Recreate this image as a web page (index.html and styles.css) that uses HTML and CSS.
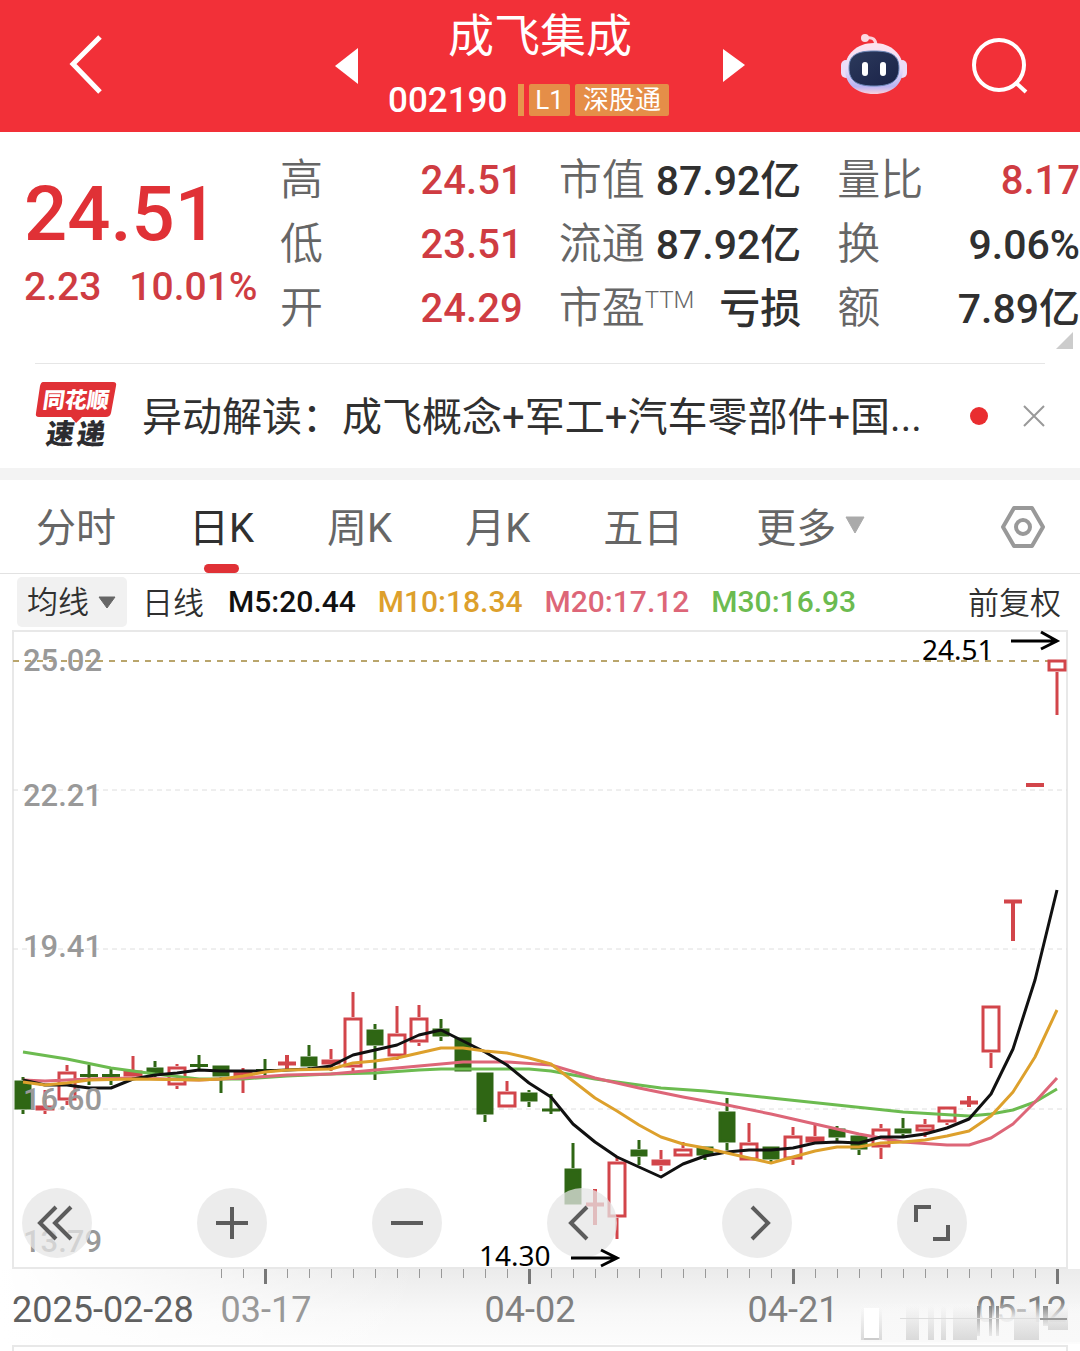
FILE: index.html
```html
<!DOCTYPE html>
<html lang="zh-CN">
<head>
    <meta charset="utf-8">
    <meta name="viewport" content="width=device-width, initial-scale=1">
    <title>成飞集成 002190</title>
    <link rel="stylesheet" href="styles.css">
</head>
<body>
    <header class="topbar">
        <button class="icon-btn back" aria-label="返回">
            <svg width="36" height="64" viewBox="0 0 36 64"><path d="M32 3 5 30l27 28" fill="none" stroke="#fff" stroke-width="5"/></svg>
        </button>
        <div class="stock">
            <button class="icon-btn" aria-label="上一只">
                <svg width="23" height="36" viewBox="0 0 23 36"><path d="M23 0v36L0 18z" fill="#fff"/></svg>
            </button>
            <div class="stock-name">
                <h1>成飞集成</h1>
                <div class="stock-code">
                    <span>002190</span>
                    <i class="bar"></i>
                    <span class="tag level">L1</span>
                    <span class="tag">深股通</span>
                </div>
            </div>
            <button class="icon-btn" aria-label="下一只">
                <svg width="23" height="36" viewBox="0 0 23 36"><path d="M1 1v33l22-17z" fill="#fff"/></svg>
            </button>
        </div>
        <div class="tools">
            <button class="icon-btn" aria-label="智能助手">
                <svg width="66" height="64" viewBox="0 0 66 64">
                    <defs>
                        <linearGradient id="shell" x1="0" y1="0" x2="0" y2="1">
                            <stop offset="0" stop-color="#ffe4ee"/>
                            <stop offset=".5" stop-color="#e9dcfa"/>
                            <stop offset=".85" stop-color="#b9b4f2"/>
                            <stop offset="1" stop-color="#fbd0dc"/>
                        </linearGradient>
                        <linearGradient id="face" x1="0" y1="0" x2="1" y2="1">
                            <stop offset="0" stop-color="#2c3a5c"/>
                            <stop offset="1" stop-color="#1a2248"/>
                        </linearGradient>
                    </defs>
                    <path d="M25 4q10-2 10 8" fill="none" stroke="#fcd3dc" stroke-width="3"/>
                    <circle cx="24" cy="4" r="4" fill="#fbd9e2"/>
                    <rect x="0" y="26" width="10" height="18" rx="5" fill="#ecdcf8"/>
                    <rect x="56" y="26" width="10" height="18" rx="5" fill="#ecdcf8"/>
                    <path d="M33 9c17 0 29 11 29 26 0 15-11 25-29 25S4 50 4 35C4 20 16 9 33 9z" fill="url(#shell)"/>
                    <path d="M33 17c17 0 25 4 25 17 0 13-8 18-25 18S8 47 8 34c0-13 8-17 25-17z" fill="url(#face)" stroke="#6a86b8" stroke-width="1"/>
                    <rect x="21" y="28" width="6" height="14" rx="3" fill="#fff"/>
                    <rect x="39" y="28" width="6" height="14" rx="3" fill="#fff"/>
                </svg>
            </button>
            <button class="icon-btn" aria-label="搜索">
                <svg width="56" height="56" viewBox="0 0 56 56" fill="none" stroke="#fff" stroke-width="4"><circle cx="27" cy="27" r="25"/><path d="m43 44 11 10"/></svg>
            </button>
        </div>
    </header>

    <section class="quote">
        <div class="price">
            <strong>24.51</strong>
            <p><span>2.23</span><span>10.01%</span></p>
        </div>
        <dl>
            <div><dt>高</dt><dd class="up">24.51</dd></div>
            <div><dt>低</dt><dd class="up">23.51</dd></div>
            <div><dt>开</dt><dd class="up">24.29</dd></div>
        </dl>
        <dl>
            <div><dt>市值</dt><dd>87.92亿</dd></div>
            <div><dt>流通</dt><dd>87.92亿</dd></div>
            <div><dt>市盈<sup>TTM</sup></dt><dd>亏损</dd></div>
        </dl>
        <dl>
            <div><dt>量比</dt><dd class="up">8.17</dd></div>
            <div><dt>换</dt><dd>9.06%</dd></div>
            <div><dt>额</dt><dd>7.89亿</dd></div>
        </dl>
        <i class="fold"></i>
    </section>

    <section class="news">
        <svg class="news-logo" width="82" height="76" viewBox="0 -2 82 76">
            <path d="M8 2h70q4 0 3 4l-5 27q-1 4-5 4H47l-6 6-5-6H4q-4 0-3-4L5 6q1-4 3-4z" fill="#e03136"/>
            <g transform="skewX(-8)" text-anchor="middle">
                <text class="logo-top" x="44" y="28">同花顺</text>
                <text class="logo-sub" x="33" y="64">速</text>
                <text class="logo-sub" x="64" y="64">递</text>
            </g>
        </svg>
        <a href="#">异动解读：成飞概念+军工+汽车零部件+国...</a>
        <i class="dot"></i>
        <button class="icon-btn" aria-label="关闭">
            <svg width="22" height="22" viewBox="0 0 22 22"><path d="M1 1l20 20M21 1 1 21" stroke="#999" stroke-width="2"/></svg>
        </button>
    </section>

    <nav class="tabs">
        <button>分时</button>
        <button class="active">日K</button>
        <button>周K</button>
        <button>月K</button>
        <button>五日</button>
        <button class="more">更多<svg width="20" height="18" viewBox="0 0 20 18"><path d="M1 1h18l-9 16z" fill="#aaa" stroke="#aaa" stroke-linejoin="round"/></svg></button>
        <button class="setting" aria-label="设置">
            <svg width="44" height="44" viewBox="0 0 44 44" fill="none" stroke="#999" stroke-linejoin="round"><path d="M13 3h18l11 19-11 19H13L2 22z" stroke-width="4"/><circle cx="22" cy="22" r="7" stroke-width="4"/></svg>
        </button>
    </nav>

    <section class="legend">
        <div class="indicator">
            <select aria-label="指标"><option>均线</option></select>
            <svg width="18" height="13" viewBox="0 0 18 13"><path d="M1 1h16l-8 11z" fill="#666" stroke="#666" stroke-linejoin="round"/></svg>
        </div>
        <span class="cycle">日线</span>
        <span class="m5">M5:20.44</span>
        <span class="m10">M10:18.34</span>
        <span class="m20">M20:17.12</span>
        <span class="m30">M30:16.93</span>
        <span class="adjust">前复权</span>
    </section>

    <section class="chart">
        <svg id="kline" viewBox="0 630 1080 721">
            <defs>
                <linearGradient id="axisBg" x1="0" y1="0" x2="0" y2="1">
                    <stop offset="0" stop-color="#ebebeb"/>
                    <stop offset=".6" stop-color="#f8f8f8"/>
                    <stop offset="1" stop-color="#fcfcfc"/>
                </linearGradient>
                <linearGradient id="axisFade" x1="0" y1="0" x2="1" y2="0">
                    <stop offset="0" stop-color="#fff"/>
                    <stop offset="1" stop-color="#fff" stop-opacity="0"/>
                </linearGradient>
                <linearGradient id="cover" x1="0" y1="0" x2="0" y2="1">
                    <stop offset="0" stop-color="#f8f8f8" stop-opacity="0"/>
                    <stop offset=".4" stop-color="#f8f8f8" stop-opacity=".9"/>
                    <stop offset="1" stop-color="#f9f9f9"/>
                </linearGradient>
                <linearGradient id="smear" x1="0" y1="0" x2="0" y2="1">
                    <stop offset="0" stop-color="#ccc" stop-opacity="0"/>
                    <stop offset="1" stop-color="#ccc" stop-opacity=".7"/>
                </linearGradient>
                <linearGradient id="streak" x1="0" y1="0" x2="0" y2="1">
                    <stop offset="0" stop-color="#888"/>
                    <stop offset="1" stop-color="#aaa" stop-opacity=".2"/>
                </linearGradient>
            </defs>
            <rect x="0" y="1269" width="1080" height="75" fill="url(#axisBg)"/>
            <rect x="0" y="1269" width="420" height="75" fill="url(#axisFade)"/>
            <path class="frame" d="M13 631H1067V1268H13ZM13 1351V1346H1067V1351"/>
            <path class="grid" d="M13 790H1067M13 949H1067M13 1109H1067"/>
            <path class="grid-top" d="M13 661H1067"/>
            <g id="candles"></g>
            <g id="averages"></g>
            <g id="ticks"></g>
            <g class="scale">
                <text x="23" y="671">25.02</text>
                <text x="23" y="806">22.21</text>
                <text x="23" y="957">19.41</text>
                <text x="23" y="1110">16.60</text>
                <text x="23" y="1252">13.79</text>
            </g>
            <g class="dates">
                <text class="first" x="12" y="1322">2025-02-28</text>
                <text class="faded" x="266" y="1322" text-anchor="middle">03-17</text>
                <text x="530" y="1322" text-anchor="middle">04-02</text>
                <text x="793" y="1322" text-anchor="middle">04-21</text>
                <text x="1067" y="1322" text-anchor="end">05-12</text>
            </g>
            <g class="haze">
                <rect x="860" y="1302" width="220" height="40" fill="url(#cover)"/>
                <rect x="864" y="1308" width="15" height="31" fill="#fff"/>
                <rect x="861" y="1308" width="3" height="32" fill="url(#smear)"/>
                <rect x="879" y="1308" width="3" height="32" fill="url(#smear)"/>
                <rect x="864" y="1338" width="15" height="2" fill="#ccc"/>
                <rect x="906" y="1306" width="13" height="34" fill="url(#smear)"/>
                <rect x="928" y="1306" width="6" height="34" fill="url(#smear)"/>
                <rect x="941" y="1306" width="5" height="34" fill="url(#smear)"/>
                <rect x="953" y="1306" width="24" height="34" fill="url(#smear)"/>
                <rect x="977" y="1306" width="3" height="30" fill="url(#streak)"/>
                <rect x="989" y="1306" width="3" height="30" fill="url(#streak)"/>
                <rect x="996" y="1306" width="3" height="30" fill="url(#streak)"/>
                <rect x="1014" y="1306" width="25" height="34" fill="url(#smear)"/>
                <rect x="1043" y="1306" width="5" height="20" fill="url(#streak)"/>
                <rect x="1048" y="1306" width="20" height="24" fill="url(#smear)"/>
                <rect x="1040" y="1318" width="27" height="2" fill="#999"/>
                <rect x="900" y="1318" width="140" height="1" fill="#ddd"/>
            </g>
        </svg>
        <div class="chart-tools">
            <button aria-label="最早"><svg viewBox="0 0 70 70"><path d="M34 19 18 35l16 16M49 19 33 35l16 16"/></svg></button>
            <button aria-label="放大"><svg viewBox="0 0 70 70"><path d="M35 19v32M19 35h32"/></svg></button>
            <button aria-label="缩小"><svg viewBox="0 0 70 70"><path d="M19 35h32"/></svg></button>
            <button aria-label="左移"><svg viewBox="0 0 70 70"><path d="M40 19 24 35l16 16"/></svg></button>
            <button aria-label="右移"><svg viewBox="0 0 70 70"><path d="m30 19 16 16-16 16"/></svg></button>
            <button aria-label="全屏"><svg viewBox="0 0 70 70"><path d="M19 34V19h15M51 37v14H36"/></svg></button>
        </div>
        <svg class="marks" viewBox="0 630 1080 721">
            <text x="922" y="660">24.51</text>
            <path d="M1011 641h44M1041 632l16 9-16 8"/>
            <text x="479" y="1266">14.30</text>
            <path d="M571 1258h44M601 1250l16 8-16 8"/>
        </svg>
    </section>

    <script src="script.js"></script>
</body>
</html>
```
FILE: styles.css
```css
* {
    box-sizing: border-box;
}

body {
    margin: 0;
    background: #fff;
    color: #303030;
    font-family: Roboto, "Noto Sans CJK SC", sans-serif;
    overflow-x: hidden;
}

button,
select {
    margin: 0;
    padding: 0;
    border: none;
    background: none;
    color: inherit;
    font: inherit;
}

svg {
    display: block;
}

/* header */
.topbar {
    display: grid;
    grid-template-columns: 1fr auto 1fr;
    align-items: center;
    height: 132px;
    padding: 0 52px;
    background: #f23038;
    color: #fff;
}

.back {
    justify-self: start;
    margin-left: 16px;
}

.stock {
    display: flex;
    align-items: center;
    gap: 30px;
}

.stock-name {
    width: 304px;
}

.stock-name h1 {
    margin: 0;
    padding-top: 4px;
    font-size: 46px;
    line-height: 64px;
    font-weight: 400;
    text-align: center;
}

.stock-code {
    display: flex;
    align-items: center;
    gap: 5px;
    height: 64px;
    font-size: 35px;
    font-weight: 500;
    white-space: nowrap;
}

.bar {
    width: 6px;
    height: 32px;
    margin-left: 6px;
    background: #e8954c;
}

.tag {
    height: 32px;
    padding: 0 8px;
    border-radius: 2px;
    background: #e58e48;
    font-size: 26px;
    line-height: 32px;
    font-weight: 400;
}

.tag.level {
    padding: 0 6px;
}

.tools {
    display: flex;
    align-items: center;
    justify-content: flex-end;
    gap: 65px;
}

/* quote */
.quote {
    position: relative;
    display: grid;
    grid-template-columns: 220px 1fr 1fr 1fr;
    gap: 36px;
    padding: 17px 0 22px 24px;
}

.price {
    color: #e03136;
    white-space: nowrap;
}

.price strong {
    display: block;
    padding-top: 20px;
    font-size: 76px;
    line-height: 90px;
    font-weight: 500;
}

.price p {
    display: flex;
    gap: 28px;
    margin: 0;
    font-size: 39px;
    line-height: 56px;
    font-weight: 500;
    color: #cf3c42;
}

.quote dl {
    margin: 0;
}

.quote dl div {
    display: flex;
    justify-content: space-between;
    height: 64px;
    line-height: 62px;
    white-space: nowrap;
}

.quote dt {
    color: #666;
    font-size: 43px;
    font-weight: 350;
}

.quote sup {
    font-size: 24px;
    line-height: 0;
}

.quote dd {
    margin: 0;
    padding-top: 1px;
    font-size: 41px;
    font-weight: 500;
}

.quote .up {
    color: #cf3c42;
    font-size: 40px;
}

.fold {
    position: absolute;
    right: 7px;
    bottom: 14px;
    border-left: 17px solid transparent;
    border-bottom: 17px solid #ccc;
}

/* news */
.news {
    display: flex;
    align-items: center;
    height: 105px;
    margin: 0 35px;
    border-top: 1px solid #e6e6e6;
}

.news a {
    flex: 1;
    margin-left: 25px;
    padding-bottom: 5px;
    color: #303030;
    font-size: 40px;
    font-weight: 400;
    text-decoration: none;
    white-space: nowrap;
}

.logo-top {
    fill: #fff;
    font-size: 22px;
    font-weight: 900;
}

.logo-sub {
    fill: #2c2c30;
    font-size: 28px;
    font-weight: 900;
}

.dot {
    width: 18px;
    height: 18px;
    margin-right: 35px;
    border-radius: 50%;
    background: #e92d30;
}

/* tabs */
.tabs {
    display: flex;
    align-items: center;
    gap: 73px;
    height: 106px;
    padding: 0 35px 0 36px;
    border-top: 12px solid #f3f3f3;
    border-bottom: 1px solid #e2e2e2;
    color: #666;
    font-size: 40px;
    font-weight: 400;
    white-space: nowrap;
}

.tabs button {
    position: relative;
    padding-bottom: 4px;
}

.tabs .active {
    color: #303030;
}

.tabs .active::after {
    content: "";
    position: absolute;
    left: 50%;
    bottom: -15px;
    width: 35px;
    height: 9px;
    margin-left: -18px;
    border-radius: 5px;
    background: #e03136;
}

.tabs .more {
    display: flex;
    align-items: center;
    gap: 9px;
}

.tabs .setting {
    margin-left: auto;
    padding: 0;
}

/* average legend */
.legend {
    display: flex;
    align-items: center;
    gap: 22px;
    height: 56px;
    padding: 0 19px 0 17px;
    font-size: 30px;
    font-weight: 500;
    white-space: nowrap;
}

.legend span {
    padding-bottom: 2px;
}

.indicator {
    position: relative;
    width: 110px;
    margin-right: -7px;
}

.indicator select {
    width: 100%;
    height: 50px;
    padding-left: 10px;
    border-radius: 5px;
    background: #f1f1f1;
    appearance: none;
    font-size: 31px;
    font-weight: 350;
}

.indicator svg {
    position: absolute;
    top: 19px;
    right: 11px;
    pointer-events: none;
}

.legend .cycle,
.legend .adjust {
    padding-bottom: 4px;
    font-size: 31px;
    font-weight: 350;
}

.cycle {
    margin-right: 2px;
}

.adjust {
    margin-left: auto;
}

.m5 { color: #111; }
.m10 { color: #dda02c; }
.m20 { color: #dd6678; }
.m30 { color: #6cbb50; }

/* chart */
.chart {
    position: relative;
}

.chart > svg {
    width: 100%;
}

.frame {
    fill: none;
    stroke: #e8e8e8;
    stroke-width: 2;
}

.grid {
    stroke: #dedede;
    stroke-dasharray: 5 4;
}

.grid-top {
    stroke: #b9a56c;
    stroke-width: 2;
    stroke-dasharray: 6 6;
}

.up-candle {
    fill: none;
    stroke: #d2454a;
    stroke-width: 3;
}

.bar-candle {
    stroke-width: 4;
}

.down-candle {
    fill: #2f6614;
    stroke: #2f6614;
    stroke-width: 3;
}

.average {
    fill: none;
    stroke: currentColor;
    stroke-width: 3;
    stroke-linejoin: round;
}

.scale {
    fill: #999;
    font-size: 31px;
    font-weight: 500;
}

.tick {
    stroke: #999;
    stroke-width: 1;
    shape-rendering: crispEdges;
}

.tick.major {
    stroke: #777;
    stroke-width: 3;
}

.dates {
    fill: #808080;
    font-size: 36px;
    font-weight: 400;
}

.dates .first {
    fill: #606060;
}

.dates .faded {
    fill: #999;
}

.chart-tools {
    position: absolute;
    right: 113px;
    bottom: 93px;
    left: 22px;
    display: flex;
    justify-content: space-between;
}

.chart-tools button {
    width: 70px;
    height: 70px;
    border-radius: 50%;
    background: rgba(230, 230, 230, .75);
}

.chart-tools path {
    fill: none;
    stroke: #5c5c5c;
    stroke-width: 4;
}

.chart .marks {
    position: absolute;
    top: 0;
    left: 0;
    pointer-events: none;
}

.marks text {
    fill: #000;
    font-family: "Noto Sans", sans-serif;
    font-size: 28px;
}

.marks path {
    fill: none;
    stroke: #000;
    stroke-width: 3;
}
```
FILE: script.js
```js
const SVG_NS = "http://www.w3.org/2000/svg";
const STEP = 22;
const FIRST_X = 23;

// [up/down, high, body top, body bottom, low]
const candles = [
    ["d", 1077, 1080, 1110, 1114], ["u", 1090, 1105, 1111, 1114], ["u", 1065, 1071, 1101, 1105],
    ["d", 1065, 1074, 1077, 1085], ["d", 1069, 1074, 1077, 1085], ["u", 1056, 1070, 1077, 1077],
    ["d", 1061, 1067, 1074, 1077], ["u", 1064, 1066, 1086, 1089], ["d", 1055, 1064, 1067, 1070],
    ["d", 1065, 1065, 1077, 1093], ["u", 1068, 1071, 1078, 1093], ["d", 1059, 1069, 1072, 1076],
    ["u", 1055, 1061, 1066, 1070], ["d", 1045, 1056, 1067, 1069], ["u", 1049, 1059, 1065, 1071],
    ["u", 992, 1017, 1068, 1071], ["d", 1024, 1029, 1046, 1080], ["u", 1006, 1033, 1057, 1060],
    ["u", 1005, 1017, 1043, 1046], ["d", 1019, 1028, 1037, 1041], ["d", 1037, 1037, 1072, 1072],
    ["d", 1072, 1072, 1115, 1122], ["u", 1081, 1091, 1108, 1108], ["d", 1090, 1092, 1102, 1107],
    ["d", 1094, 1109, 1111, 1114], ["d", 1143, 1168, 1205, 1205], ["u", 1189, 1202, 1207, 1225],
    ["u", 1156, 1161, 1218, 1239], ["d", 1140, 1149, 1157, 1165], ["u", 1150, 1159, 1166, 1171],
    ["u", 1142, 1148, 1157, 1157], ["d", 1146, 1146, 1156, 1160], ["d", 1098, 1111, 1143, 1150],
    ["u", 1123, 1142, 1161, 1161], ["d", 1146, 1146, 1160, 1163], ["u", 1127, 1135, 1160, 1165],
    ["u", 1123, 1136, 1143, 1143], ["d", 1126, 1128, 1138, 1142], ["d", 1135, 1135, 1150, 1155],
    ["u", 1124, 1128, 1148, 1159], ["d", 1118, 1128, 1134, 1138], ["u", 1119, 1124, 1132, 1137],
    ["u", 1106, 1106, 1123, 1125], ["u", 1096, 1100, 1105, 1107], ["u", 1005, 1005, 1053, 1068],
    ["u", 900, 900, 903, 941], ["u", 784, 783, 787, 786], ["u", 659, 659, 672, 715]
];

// [index, y] points of every average line
const averages = {
    m30: [[0, 1052], [2, 1059], [4, 1068], [6, 1074], [8, 1079], [10, 1079], [12, 1076], [14, 1074], [16, 1073], [18, 1070], [19, 1069], [23, 1069], [24, 1071], [26, 1079], [28, 1085], [29, 1088], [31, 1091], [34, 1098], [37, 1105], [40, 1112], [43, 1116], [44, 1114], [45, 1110], [46, 1102], [47, 1089]],
    m20: [[0, 1080], [1, 1081], [3, 1079], [5, 1078], [8, 1080], [10, 1078], [12, 1075], [14, 1074], [16, 1070], [18, 1066], [20, 1062], [22, 1062], [24, 1065], [26, 1078], [28, 1088], [30, 1097], [32, 1105], [34, 1114], [36, 1124], [38, 1134], [40, 1142], [42, 1145], [43, 1145], [44, 1138], [45, 1124], [46, 1102], [47, 1078]],
    m5: [[0, 1080], [1, 1085], [2, 1085], [3, 1088], [4, 1088], [5, 1079], [6, 1075], [7, 1073], [8, 1070], [9, 1071], [11, 1071], [13, 1069], [14, 1066], [15, 1055], [16, 1050], [17, 1045], [18, 1035], [19, 1030], [20, 1041], [21, 1052], [22, 1065], [23, 1083], [24, 1097], [25, 1124], [26, 1142], [27, 1157], [28, 1167], [29, 1177], [30, 1164], [31, 1156], [32, 1152], [33, 1150], [34, 1150], [35, 1148], [36, 1143], [37, 1142], [38, 1143], [39, 1137], [40, 1137], [41, 1134], [42, 1128], [43, 1119], [44, 1094], [45, 1049], [46, 980], [47, 890]],
    m10: [[0, 1082], [1, 1085], [2, 1083], [3, 1080], [5, 1079], [8, 1080], [9, 1079], [10, 1076], [11, 1072], [12, 1070], [14, 1069], [15, 1063], [16, 1061], [17, 1058], [18, 1053], [19, 1048], [20, 1048], [21, 1051], [22, 1053], [23, 1058], [24, 1064], [25, 1081], [26, 1098], [27, 1111], [28, 1125], [29, 1137], [30, 1144], [31, 1148], [32, 1153], [33, 1158], [34, 1163], [35, 1157], [36, 1151], [37, 1147], [38, 1147], [39, 1143], [40, 1142], [41, 1140], [42, 1136], [43, 1131], [44, 1116], [45, 1092], [46, 1057], [47, 1010]]
};

function addPath(parent, d, className) {
    const path = document.createElementNS(SVG_NS, "path");
    path.setAttribute("d", d);
    path.setAttribute("class", className);
    document.getElementById(parent).appendChild(path);
}

candles.forEach(function([type, high, top, bottom, low], i) {
    const x = FIRST_X + i * STEP;
    let className = type === "u" ? "up-candle" : "down-candle";
    let d = `M${x} ${high}V${top}M${x} ${bottom}V${low}`;
    if (bottom - top < 6) {
        // open and close are nearly equal: draw a single bar
        const middle = (top + bottom) / 2;
        d = `M${x} ${high}V${low}M${x - 9} ${middle}H${x + 9}`;
        if (type === "u") {
            className += " bar-candle";
        }
    } else if (type === "u") {
        d += `M${x - 8} ${top + 2}H${x + 8}V${bottom - 2}H${x - 8}Z`;
    } else {
        d += `M${x - 7} ${top + 2}H${x + 7}V${bottom - 2}H${x - 7}Z`;
    }
    addPath("candles", d, className);
});

Object.keys(averages).forEach(function(name) {
    const points = averages[name].map(([i, y]) => `${FIRST_X + i * STEP} ${y}`);
    addPath("averages", "M" + points.join("L"), "average " + name);
});

for (let x = 221; x <= 1057; x += STEP) {
    const major = (x - 265) % 264 === 0;
    addPath("ticks", `M${x} 1269V${major ? 1284 : 1278}`, major ? "tick major" : "tick");
}
```
